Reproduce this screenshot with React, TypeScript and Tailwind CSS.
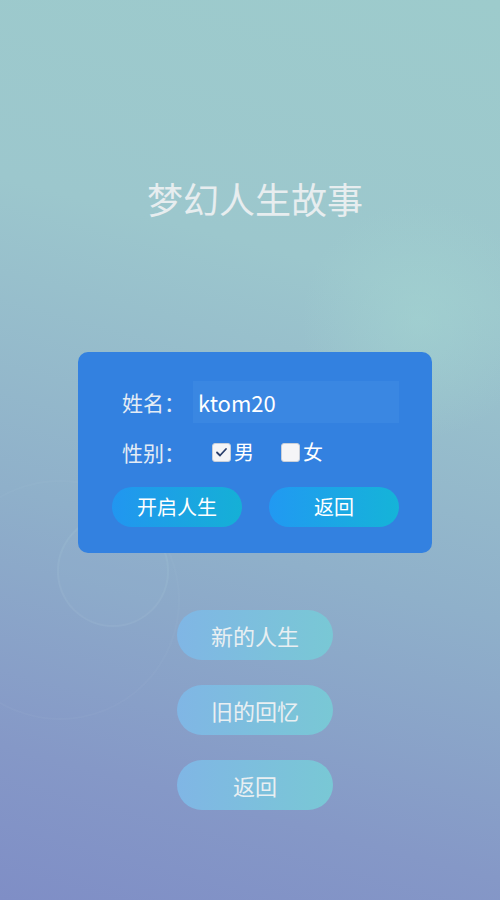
import React from "react";

const font = { fontFamily: '"Noto Sans CJK SC", "Noto Sans", sans-serif' };

function Check({ checked, label }: { checked: boolean; label: string }) {
  return (
    <div className="flex items-center gap-[3px]">
      <div className="w-[19px] h-[19px] rounded-[3px] bg-[#f5f5f7] border border-[#c9cfd8] flex items-center justify-center">
        {checked && (
          <svg width="13" height="13" viewBox="0 0 13 13">
            <path d="M2 6.5 L5 9.5 L11 3" fill="none" stroke="#2b3f6b" strokeWidth="1.8" strokeLinecap="round" strokeLinejoin="round" />
          </svg>
        )}
      </div>
      <span className="text-[20px] leading-none text-white">{label}</span>
    </div>
  );
}

export default function App() {
  return (
    <div
      style={font}
      className="relative w-[500px] h-[900px] overflow-hidden bg-[linear-gradient(195deg,#9dcbcc_0%,#9cc7cd_30%,#8fb0ca_60%,#8598c7_85%,#7f8ec6_100%)]"
    >
      {/* soft glow on the right */}
      <div className="absolute left-[300px] top-[200px] w-[240px] h-[240px] rounded-full bg-[radial-gradient(circle,rgba(165,215,210,0.5)_0%,rgba(165,215,210,0)_70%)]" />
      {/* decorative circles */}
      <div className="absolute left-[57px] top-[515px] w-[112px] h-[112px] rounded-full border-2 border-[rgba(200,220,230,0.07)] bg-[rgba(170,200,215,0.06)]" />
      <div className="absolute left-[-60px] top-[480px] w-[240px] h-[240px] rounded-full border-2 border-[rgba(200,220,230,0.05)]" />

      <div className="relative flex flex-col items-center pl-[10px]">
        <h1 className="mt-[174px] text-[36px] leading-[48px] text-[#e7edef] font-normal">梦幻人生故事</h1>

        <div className="mt-[130px] w-[354px] h-[201px] rounded-[10px] bg-[#3381e0] flex flex-col pl-[34px] pr-[33px]">
          <div className="mt-[29px] flex items-center">
            <span className="ml-[10px] w-[71px] text-[21px] leading-none text-[#e4ecf5]">姓名：</span>
            <div className="w-[206px] h-[42px] bg-[#3a87e2] flex items-center pl-[5px]">
              <span className="text-[22px] leading-none text-white">ktom20</span>
            </div>
          </div>
          <div className="mt-[9px] flex items-center h-[40px]">
            <span className="ml-[10px] w-[90px] text-[21px] leading-none text-[#e4ecf5]">性别：</span>
            <Check checked label="男" />
            <div className="w-[27px]" />
            <Check checked={false} label="女" />
          </div>
          <div className="mt-[15px] flex items-center justify-between">
            <button className="w-[130px] h-[40px] rounded-full bg-[linear-gradient(90deg,#2196f0,#15b0d6)] text-white text-[20px] leading-none">开启人生</button>
            <button className="w-[130px] h-[40px] rounded-full bg-[linear-gradient(90deg,#2199f2,#15b4d8)] text-white text-[20px] leading-none">返回</button>
          </div>
        </div>

        <div className="mt-[57px] flex flex-col gap-[25px]">
          {["新的人生", "旧的回忆", "返回"].map((t) => (
            <button
              key={t}
              className="w-[156px] h-[50px] rounded-full bg-[linear-gradient(90deg,#80b6e5,#79c8d5)] text-[#e9eff2] text-[22px] leading-none"
            >
              {t}
            </button>
          ))}
        </div>
      </div>
    </div>
  );
}
